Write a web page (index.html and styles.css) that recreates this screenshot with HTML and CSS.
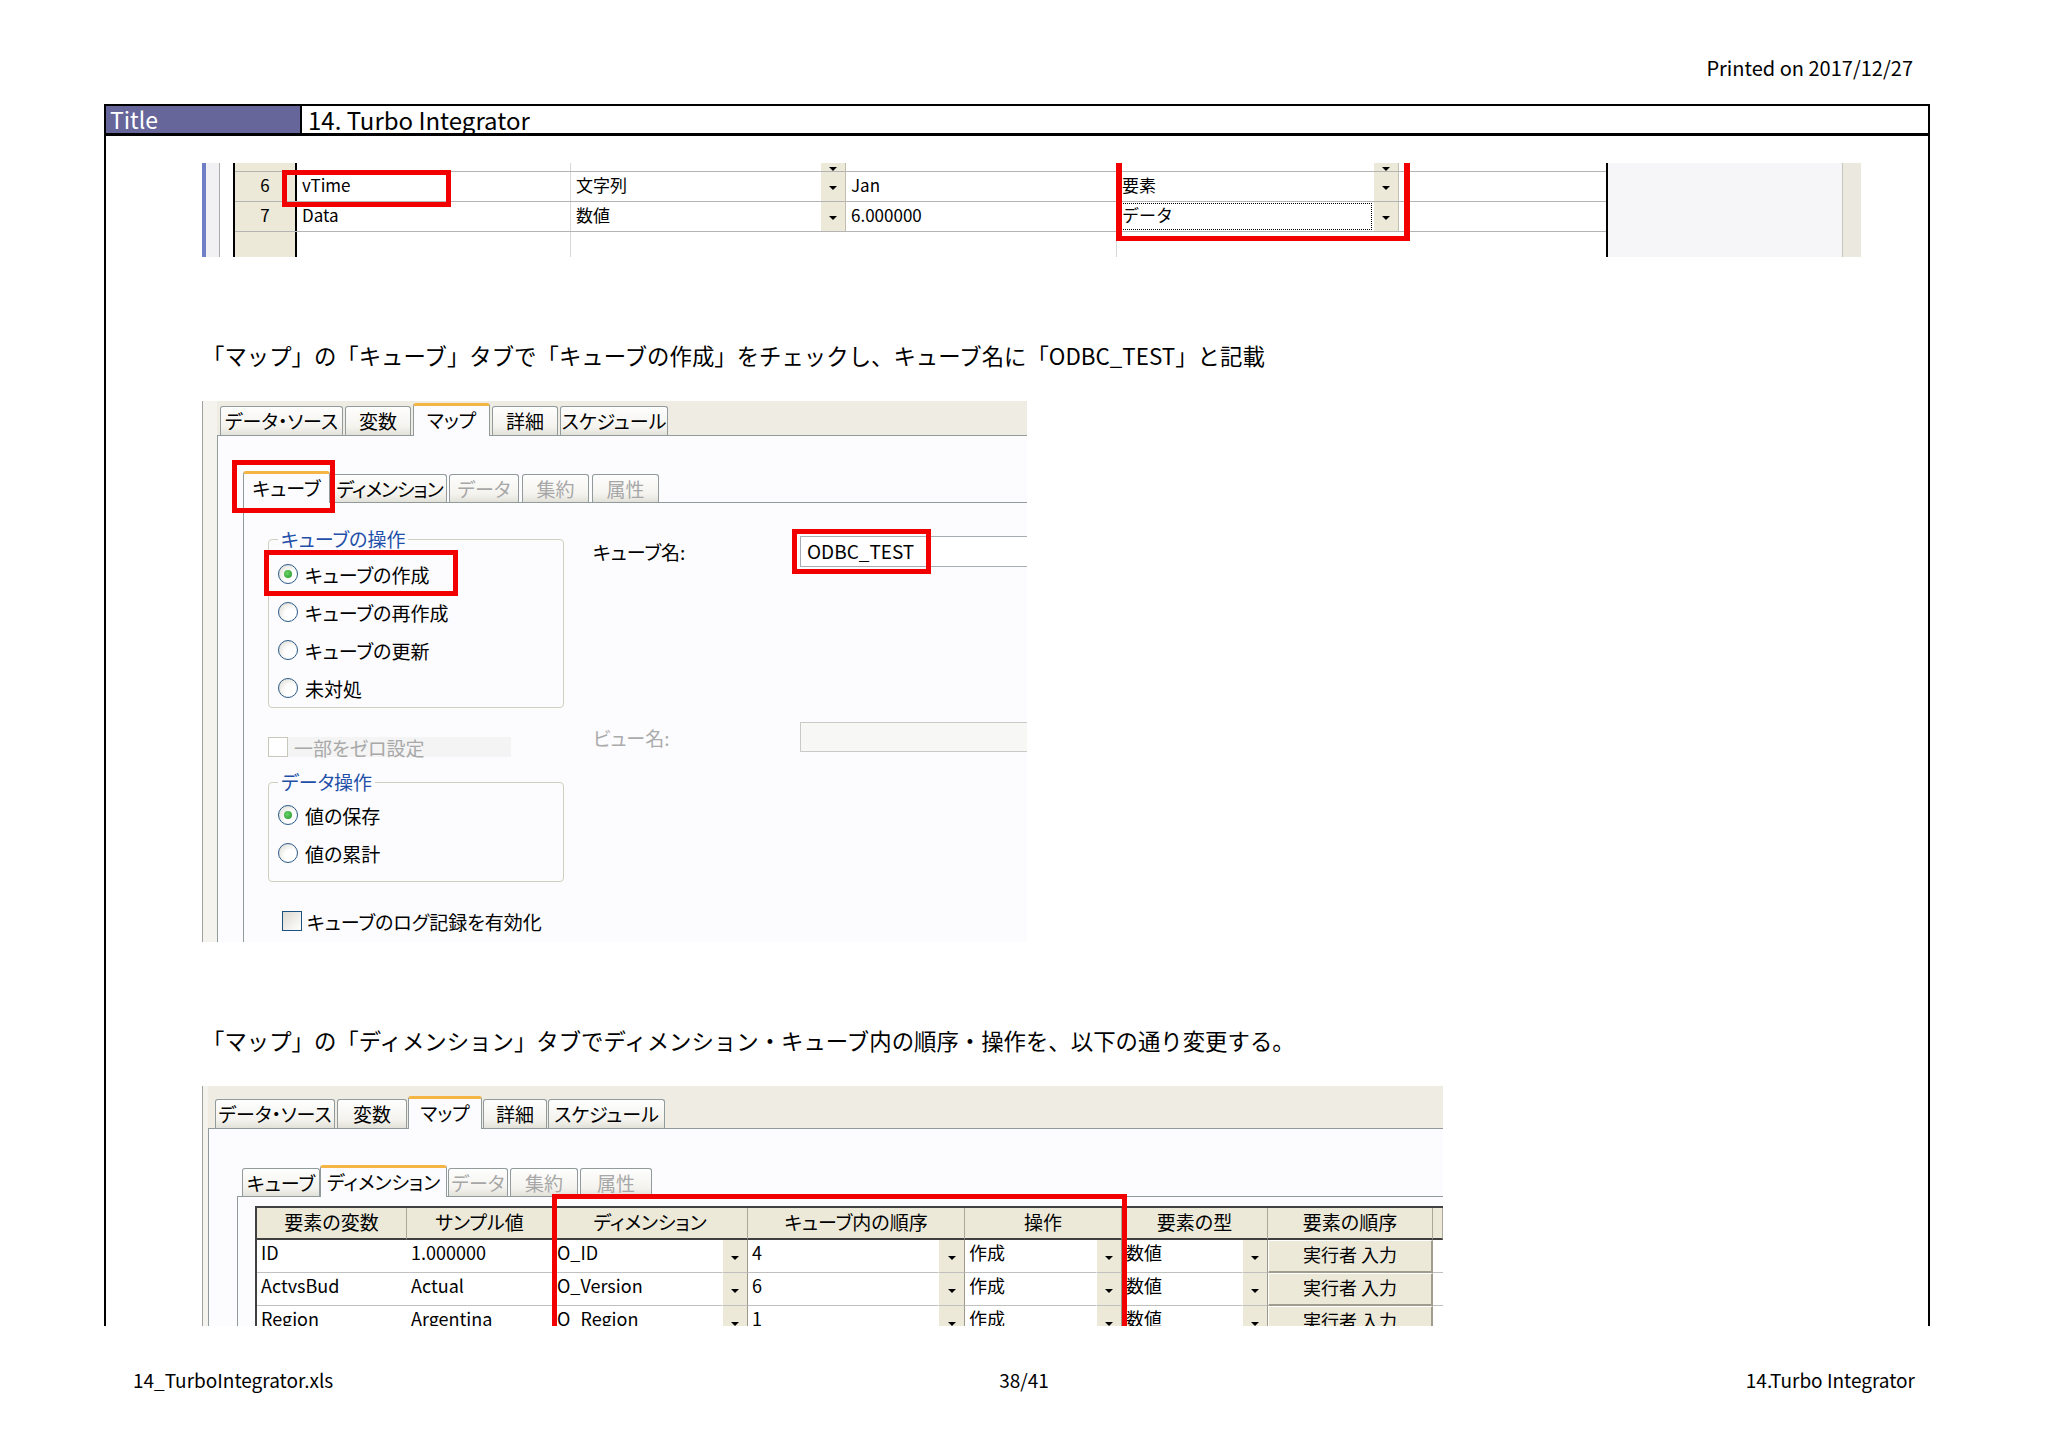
FILE: index.html
```html
<!DOCTYPE html>
<html lang="ja">
<head>
    <meta charset="UTF-8">
    <title>14_TurboIntegrator.xls</title>
    <link rel="stylesheet" href="styles.css">
</head>
<body>
    <div class="printed">Printed on 2017/12/27</div>

    <div class="sheet">
        <div class="title-bar">
            <div class="title-label">Title</div>
            <div class="title-text">14. Turbo Integrator</div>
        </div>

        <div class="content">
            <!-- variables grid (cropped) -->
            <div class="s1">
                <div class="s1-blue"></div>
                <div class="s1-side"></div>
                <div class="s1-grid">
                    <div class="s1-row part">
                        <div class="rh"></div><div class="c c-name"></div><div class="c c-type"></div><div class="dd"></div><div class="c c-val"></div><div class="c c-kind"></div><div class="dd"></div><div class="c c-rest"></div>
                    </div>
                    <div class="s1-row">
                        <div class="rh">6</div><div class="c c-name">vTime</div><div class="c c-type">文字列</div><div class="dd"></div><div class="c c-val">Jan</div><div class="c c-kind">要素</div><div class="dd"></div><div class="c c-rest"></div>
                    </div>
                    <div class="s1-row">
                        <div class="rh">7</div><div class="c c-name">Data</div><div class="c c-type">数値</div><div class="dd"></div><div class="c c-val">6.000000</div><div class="c c-kind focus">データ</div><div class="dd"></div><div class="c c-rest"></div>
                    </div>
                    <div class="s1-row empty">
                        <div class="rh"></div><div class="c c-name"></div><div class="c c-type"></div><div class="c-gap"></div><div class="c c-val"></div><div class="c c-kind"></div><div class="c-gap"></div><div class="c c-rest"></div>
                    </div>
                </div>
                <div class="s1-blank"></div>
                <div class="s1-bar"></div>

                <div class="mark s1-mark-name"></div>
                <div class="mark s1-mark-kind"></div>
            </div>

            <p class="note">「マップ」の「キューブ」タブで「キューブの作成」をチェックし、キューブ名に「ODBC_TEST」と記載</p>

            <!-- map / cube tab -->
            <div class="s2">
                <div class="shot-side"></div>
                <div class="dlg">
                    <div class="tabs">
                        <div class="tab">データ・ソース</div>
                        <div class="tab">変数</div>
                        <div class="tab on">マップ</div>
                        <div class="tab">詳細</div>
                        <div class="tab">スケジュール</div>
                    </div>
                    <div class="panel">
                        <div class="subtabs">
                            <div class="subtab on">キューブ</div>
                            <div class="subtab">ディメンション</div>
                            <div class="subtab off">データ</div>
                            <div class="subtab off">集約</div>
                            <div class="subtab off">属性</div>
                        </div>
                        <div class="subpanel">
                            <div class="s2-left">
                                <fieldset class="group g-cube">
                                    <legend>キューブの操作</legend>
                                    <div class="opt"><span class="radio on"></span>キューブの作成</div>
                                    <div class="opt"><span class="radio"></span>キューブの再作成</div>
                                    <div class="opt"><span class="radio"></span>キューブの更新</div>
                                    <div class="opt"><span class="radio"></span>未対処</div>
                                </fieldset>
                                <div class="check zero off"><span class="box"></span>一部をゼロ設定</div>
                                <fieldset class="group g-data">
                                    <legend>データ操作</legend>
                                    <div class="opt"><span class="radio on"></span>値の保存</div>
                                    <div class="opt"><span class="radio"></span>値の累計</div>
                                </fieldset>
                                <div class="check log"><span class="box"></span>キューブのログ記録を有効化</div>
                            </div>
                            <div class="s2-right">
                                <div class="field">
                                    <span class="field-label">キューブ名:</span>
                                    <span class="field-input">ODBC_TEST</span>
                                </div>
                                <div class="field view off">
                                    <span class="field-label">ビュー名:</span>
                                    <span class="field-input"></span>
                                </div>
                            </div>
                        </div>
                    </div>
                </div>

                <div class="mark s2-mark-tab"></div>
                <div class="mark s2-mark-create"></div>
                <div class="mark s2-mark-name"></div>
            </div>

            <p class="note">「マップ」の「ディメンション」タブでディメンション・キューブ内の順序・操作を、以下の通り変更する。</p>

            <!-- map / dimension tab -->
            <div class="s3">
                <div class="shot-side narrow"></div>
                <div class="dlg">
                    <div class="tabs tall">
                        <div class="tab">データ・ソース</div>
                        <div class="tab">変数</div>
                        <div class="tab on">マップ</div>
                        <div class="tab">詳細</div>
                        <div class="tab">スケジュール</div>
                    </div>
                    <div class="panel wide">
                        <div class="subtabs inset">
                            <div class="subtab">キューブ</div>
                            <div class="subtab on">ディメンション</div>
                            <div class="subtab off">データ</div>
                            <div class="subtab off">集約</div>
                            <div class="subtab off">属性</div>
                        </div>
                        <div class="subpanel grid-pad">
                            <div class="dgrid">
                                <div class="hd">要素の変数</div>
                                <div class="hd">サンプル値</div>
                                <div class="hd span2">ディメンション</div>
                                <div class="hd span2">キューブ内の順序</div>
                                <div class="hd span2">操作</div>
                                <div class="hd span2">要素の型</div>
                                <div class="hd">要素の順序</div>
                                <div class="hd"></div>

                                <div class="td">ID</div>
                                <div class="td">1.000000</div>
                                <div class="td">O_ID</div><div class="dd"></div>
                                <div class="td">4</div><div class="dd"></div>
                                <div class="td">作成</div><div class="dd"></div>
                                <div class="td">数値</div><div class="dd"></div>
                                <div class="btn">実行者 入力</div>
                                <div class="td"></div>

                                <div class="td">ActvsBud</div>
                                <div class="td">Actual</div>
                                <div class="td">O_Version</div><div class="dd"></div>
                                <div class="td">6</div><div class="dd"></div>
                                <div class="td">作成</div><div class="dd"></div>
                                <div class="td">数値</div><div class="dd"></div>
                                <div class="btn">実行者 入力</div>
                                <div class="td"></div>

                                <div class="td">Region</div>
                                <div class="td">Argentina</div>
                                <div class="td">O_Region</div><div class="dd"></div>
                                <div class="td">1</div><div class="dd"></div>
                                <div class="td">作成</div><div class="dd"></div>
                                <div class="td">数値</div><div class="dd"></div>
                                <div class="btn">実行者 入力</div>
                                <div class="td"></div>
                            </div>
                        </div>
                    </div>
                </div>

                <div class="mark s3-mark"></div>
            </div>
        </div>
    </div>

    <div class="footer">
        <span>14_TurboIntegrator.xls</span>
        <span class="mid">38/41</span>
        <span class="end">14.Turbo Integrator</span>
    </div>
</body>
</html>
```

FILE: styles.css
```css
* {
    box-sizing: border-box;
}

body {
    margin: 0;
    background: #fff;
    color: #000;
    font-family: "Noto Sans CJK JP", "Noto Sans", sans-serif;
}

/* page header / footer */
.printed {
    height: 80px;
    margin-bottom: 24px;
    padding: 55px 135px 0 0;
    text-align: right;
    font-size: 20px;
    line-height: 25px;
}

.footer {
    display: grid;
    grid-template-columns: 1fr 1fr 1fr;
    margin-top: 41px;
    padding: 0 133px;
    font-size: 19px;
    line-height: 26px;
}

.footer .mid { text-align: center; }
.footer .end { text-align: right; }

/* sheet frame */
.sheet {
    width: 1826px;
    height: 1222px;
    margin-left: 104px;
    border-left: 2px solid #000;
    border-right: 2px solid #000;
}

.title-bar {
    display: flex;
    height: 32px;
    border-top: 2px solid #000;
    border-bottom: 3px solid #000;
}

.title-label {
    width: 196px;
    padding-left: 4px;
    background: #66669a;
    color: #fff;
    border-right: 2px solid #000;
    font-size: 23px;
    line-height: 27px;
}

.title-text {
    padding-left: 6px;
    font-size: 24px;
    line-height: 27px;
}

.content {
    height: 1190px;
    padding-left: 96px;
    overflow: hidden;
}

.note {
    margin: 82px 0 30px;
    font-size: 22.4px;
    line-height: 32px;
}

/* red highlight boxes */
.mark {
    position: absolute;
    border: 5px solid #f20000;
}

/* ---------- screenshot 1: variables grid ---------- */
.s1 {
    position: relative;
    display: flex;
    width: 1659px;
    height: 94px;
    margin-top: 27px;
    overflow: hidden;
    font-size: 17px;
}

.s1-blue {
    width: 4px;
    background: #6f7fc6;
}

.s1-side {
    width: 27px;
    background: linear-gradient(to right, #f1f1f3 13px, #a9a9a9 13px, #a9a9a9 14px, #fff 14px);
}

.s1-grid {
    display: flex;
    flex-direction: column;
    width: 1375px;
    border-left: 2px solid #000;
    border-right: 2px solid #000;
}

.s1-row {
    display: flex;
    height: 30px;
    border-bottom: 1px solid #b4b4b4;
    line-height: 25px;
}

.s1-row.part { height: 9px; }
.s1-row.empty { flex: 1; border-bottom: 0; }

.rh {
    width: 62px;
    background: #ece9d8;
    border-right: 2px solid #000;
    text-align: center;
}

.s1 .c { padding-left: 5px; }
.c-name { width: 274px; border-right: 1px solid #d6d6d6; }
.c-type { width: 249px; }
.c-val { width: 271px; border-right: 1px solid #d6d6d6; }
.c-kind { width: 256px; }
.c-rest { flex: 1; }
.c-gap { width: 26px; }

.c-kind.focus {
    outline: 1px dotted #000;
    outline-offset: -2px;
}

.dd {
    display: flex;
    align-items: center;
    justify-content: center;
    width: 26px;
    background: #ece9d8;
    border-left: 1px solid #fff;
    border-right: 1px solid #c2bfb0;
}

.dd::after {
    content: "";
    margin-top: 3px;
    border-left: 4px solid transparent;
    border-right: 4px solid transparent;
    border-top: 4px solid #000;
}

.s1-blank {
    width: 234px;
    background: #f6f5f8;
}

.s1-bar {
    width: 19px;
    background: #ebe9df;
    border-left: 1px solid #c8c6bc;
}

.s1-mark-name { left: 80px; top: 7px; width: 169px; height: 37px; }
.s1-mark-kind { left: 914px; top: -6px; width: 294px; height: 84px; border-width: 6px 6px 5px; }

/* ---------- dialog pieces shared by screenshots 2 and 3 ---------- */
.shot-side {
    width: 15px;
    background: #f4f3ee;
    border-left: 1px solid #a0a0a0;
}

.shot-side.narrow { width: 6px; }

.dlg {
    display: flex;
    flex: 1;
    flex-direction: column;
}

.tabs {
    display: flex;
    align-items: flex-end;
    height: 35px;
    padding-left: 3px;
    background: #eeece3;
    border-bottom: 1px solid #919b9c;
}

.tabs.tall {
    height: 43px;
    padding-left: 7px;
}

.tab,
.subtab {
    display: flex;
    justify-content: center;
    height: 29px;
    margin-right: 2px;
    background: linear-gradient(#fefefe, #f4f3ee 70%, #e2e1d9);
    border: 1px solid #919b9c;
    border-bottom: 0;
    border-radius: 3px 3px 0 0;
    font-size: 19px;
    line-height: 27px;
    font-feature-settings: "palt";
    white-space: nowrap;
}

.tab.on,
.subtab.on {
    position: relative;
    height: 33px;
    margin-bottom: -1px;
    background: #fcfcfe;
    border-top: 3px solid #f5b545;
}

.subtab { height: 28px; }
.subtab.on { height: 32px; }
.subtab.off { color: #a7a7a7; }

/* tab widths, taken from the captured dialogs */
.s2 .tab:nth-child(1) { width: 123px; }
.s2 .tab:nth-child(2) { width: 66px; }
.s2 .tab:nth-child(3) { width: 77px; }
.s2 .tab:nth-child(4) { width: 66px; }
.s2 .tab:nth-child(5) { width: 108px; }

.s2 .subtab:nth-child(1) { width: 87px; }
.s2 .subtab:nth-child(2) { width: 115px; letter-spacing: -1px; }
.s2 .subtab:nth-child(3) { width: 70px; margin-right: 3px; }
.s2 .subtab:nth-child(4) { width: 67px; margin-right: 3px; }
.s2 .subtab:nth-child(5) { width: 67px; }

.s3 .tab { margin-right: 1px; }
.s3 .tab:nth-child(1) { width: 120px; margin-right: 2px; }
.s3 .tab:nth-child(2) { width: 70px; }
.s3 .tab:nth-child(3) { width: 74px; }
.s3 .tab:nth-child(4) { width: 64px; }
.s3 .tab:nth-child(5) { width: 117px; }

.s3 .subtab:nth-child(1) { width: 78px; margin-right: 0; }
.s3 .subtab:nth-child(2) { width: 127px; margin-right: 1px; }
.s3 .subtab:nth-child(3) { width: 60px; }
.s3 .subtab:nth-child(4) { width: 68px; }
.s3 .subtab:nth-child(5) { width: 72px; }

.panel {
    display: flex;
    flex: 1;
    flex-direction: column;
    padding: 35px 0 0 25px;
    background: #fcfcfe;
    border-left: 1px solid #919b9c;
}

.panel.wide { padding-left: 28px; }

.subtabs {
    display: flex;
    align-items: flex-end;
    height: 31px;
}

.subtabs.inset {
    height: 32px;
    margin-left: 5px;
}

.subpanel {
    display: flex;
    flex: 1;
    border-top: 1px solid #919b9c;
    border-left: 1px solid #919b9c;
}

/* ---------- screenshot 2: cube tab ---------- */
.s2 {
    position: relative;
    display: flex;
    width: 825px;
    height: 541px;
    overflow: hidden;
    font-feature-settings: "palt";
}

.s2-left {
    width: 320px;
    padding-left: 24px;
}

.group {
    width: 296px;
    margin: 25px 0 0;
    padding: 5px 0 0 9px;
    border: 1px solid #d0d0bf;
    border-radius: 4px;
}

.group legend {
    padding: 0 3px;
    color: #1f4fa8;
    font-size: 19px;
    line-height: 22px;
}

.g-data {
    margin-top: 14px;
    padding: 3px 0 9px 9px;
}

.opt {
    display: flex;
    align-items: center;
    gap: 7px;
    height: 38px;
    font-size: 19px;
}

.radio {
    display: flex;
    align-items: center;
    justify-content: center;
    width: 20px;
    height: 20px;
    border: 1px solid #2a5a88;
    border-radius: 50%;
    background: radial-gradient(circle at 65% 65%, #fff 35%, #d6d4ca);
}

.radio.on::after {
    content: "";
    width: 8px;
    height: 8px;
    border-radius: 50%;
    background: radial-gradient(circle at 40% 40%, #6bd46b, #1f951f);
}

.check {
    display: flex;
    align-items: center;
    gap: 6px;
    height: 20px;
    font-size: 19px;
}

.box {
    width: 20px;
    height: 20px;
    border: 1px solid #1c5180;
    background: linear-gradient(135deg, #dcdad0, #fff);
}

.check.zero {
    width: 243px;
    margin-top: 29px;
    background: #f4f4f4;
}

.check.off { color: #a8a8a8; }
.check.off .box { border-color: #c9c7ba; background: #fff; }

.check.log {
    margin: 29px 0 0 14px;
    gap: 5px;
}

.s2-right {
    flex: 1;
    padding: 33px 0 0 29px;
}

.field {
    display: flex;
    align-items: center;
    height: 31px;
    font-size: 19px;
}

.field-label { width: 207px; }

.field-input {
    flex: 1;
    height: 31px;
    padding-left: 6px;
    background: #fff;
    border: 1px solid #a7adb4;
    border-right: 0;
    line-height: 28px;
}

.field.view {
    height: 30px;
    margin-top: 155px;
}

.field.off { color: #ababab; }
.field.off .field-input { background: #f7f7f5; border-color: #cbcbc6; height: 30px; }

.s2-mark-tab { left: 30px; top: 59px; width: 103px; height: 53px; }
.s2-mark-create { left: 62px; top: 149px; width: 194px; height: 46px; }
.s2-mark-name { left: 590px; top: 128px; width: 139px; height: 45px; }

/* ---------- screenshot 3: dimension tab ---------- */
.s3 {
    position: relative;
    display: flex;
    width: 1241px;
    height: 260px;
    overflow: hidden;
    font-feature-settings: "palt";
}

.grid-pad {
    padding: 9px 0 0 17px;
}

.dgrid {
    display: grid;
    grid-template-columns: 150px 146px 169px 26px 190px 27px 131px 26px 120px 26px 165px 10px;
    grid-template-rows: 32px 33px 33px 33px;
    align-self: flex-start;
    border-top: 2px solid #404040;
    border-left: 2px solid #404040;
    font-size: 18px;
}

.hd {
    background: #ece9d8;
    border-right: 1px solid #aca899;
    border-bottom: 2px solid #404040;
    text-align: center;
    line-height: 28px;
    font-size: 19px;
}

.hd.span2 { grid-column: span 2; }

.td {
    padding-left: 4px;
    background: #fff;
    border-bottom: 1px solid #c0c0c0;
    line-height: 24px;
}

.dgrid .dd {
    width: auto;
    border-bottom: 1px solid #c0c0c0;
    border-right: 1px solid #9d9a8c;
}

.btn {
    background: #ece9d8;
    border-top: 1px solid #fff;
    border-left: 1px solid #fff;
    border-right: 2px solid #a09d8f;
    border-bottom: 2px solid #a09d8f;
    text-align: center;
    line-height: 26px;
}

.s3-mark { left: 350px; top: 108px; width: 575px; height: 200px; }
```
